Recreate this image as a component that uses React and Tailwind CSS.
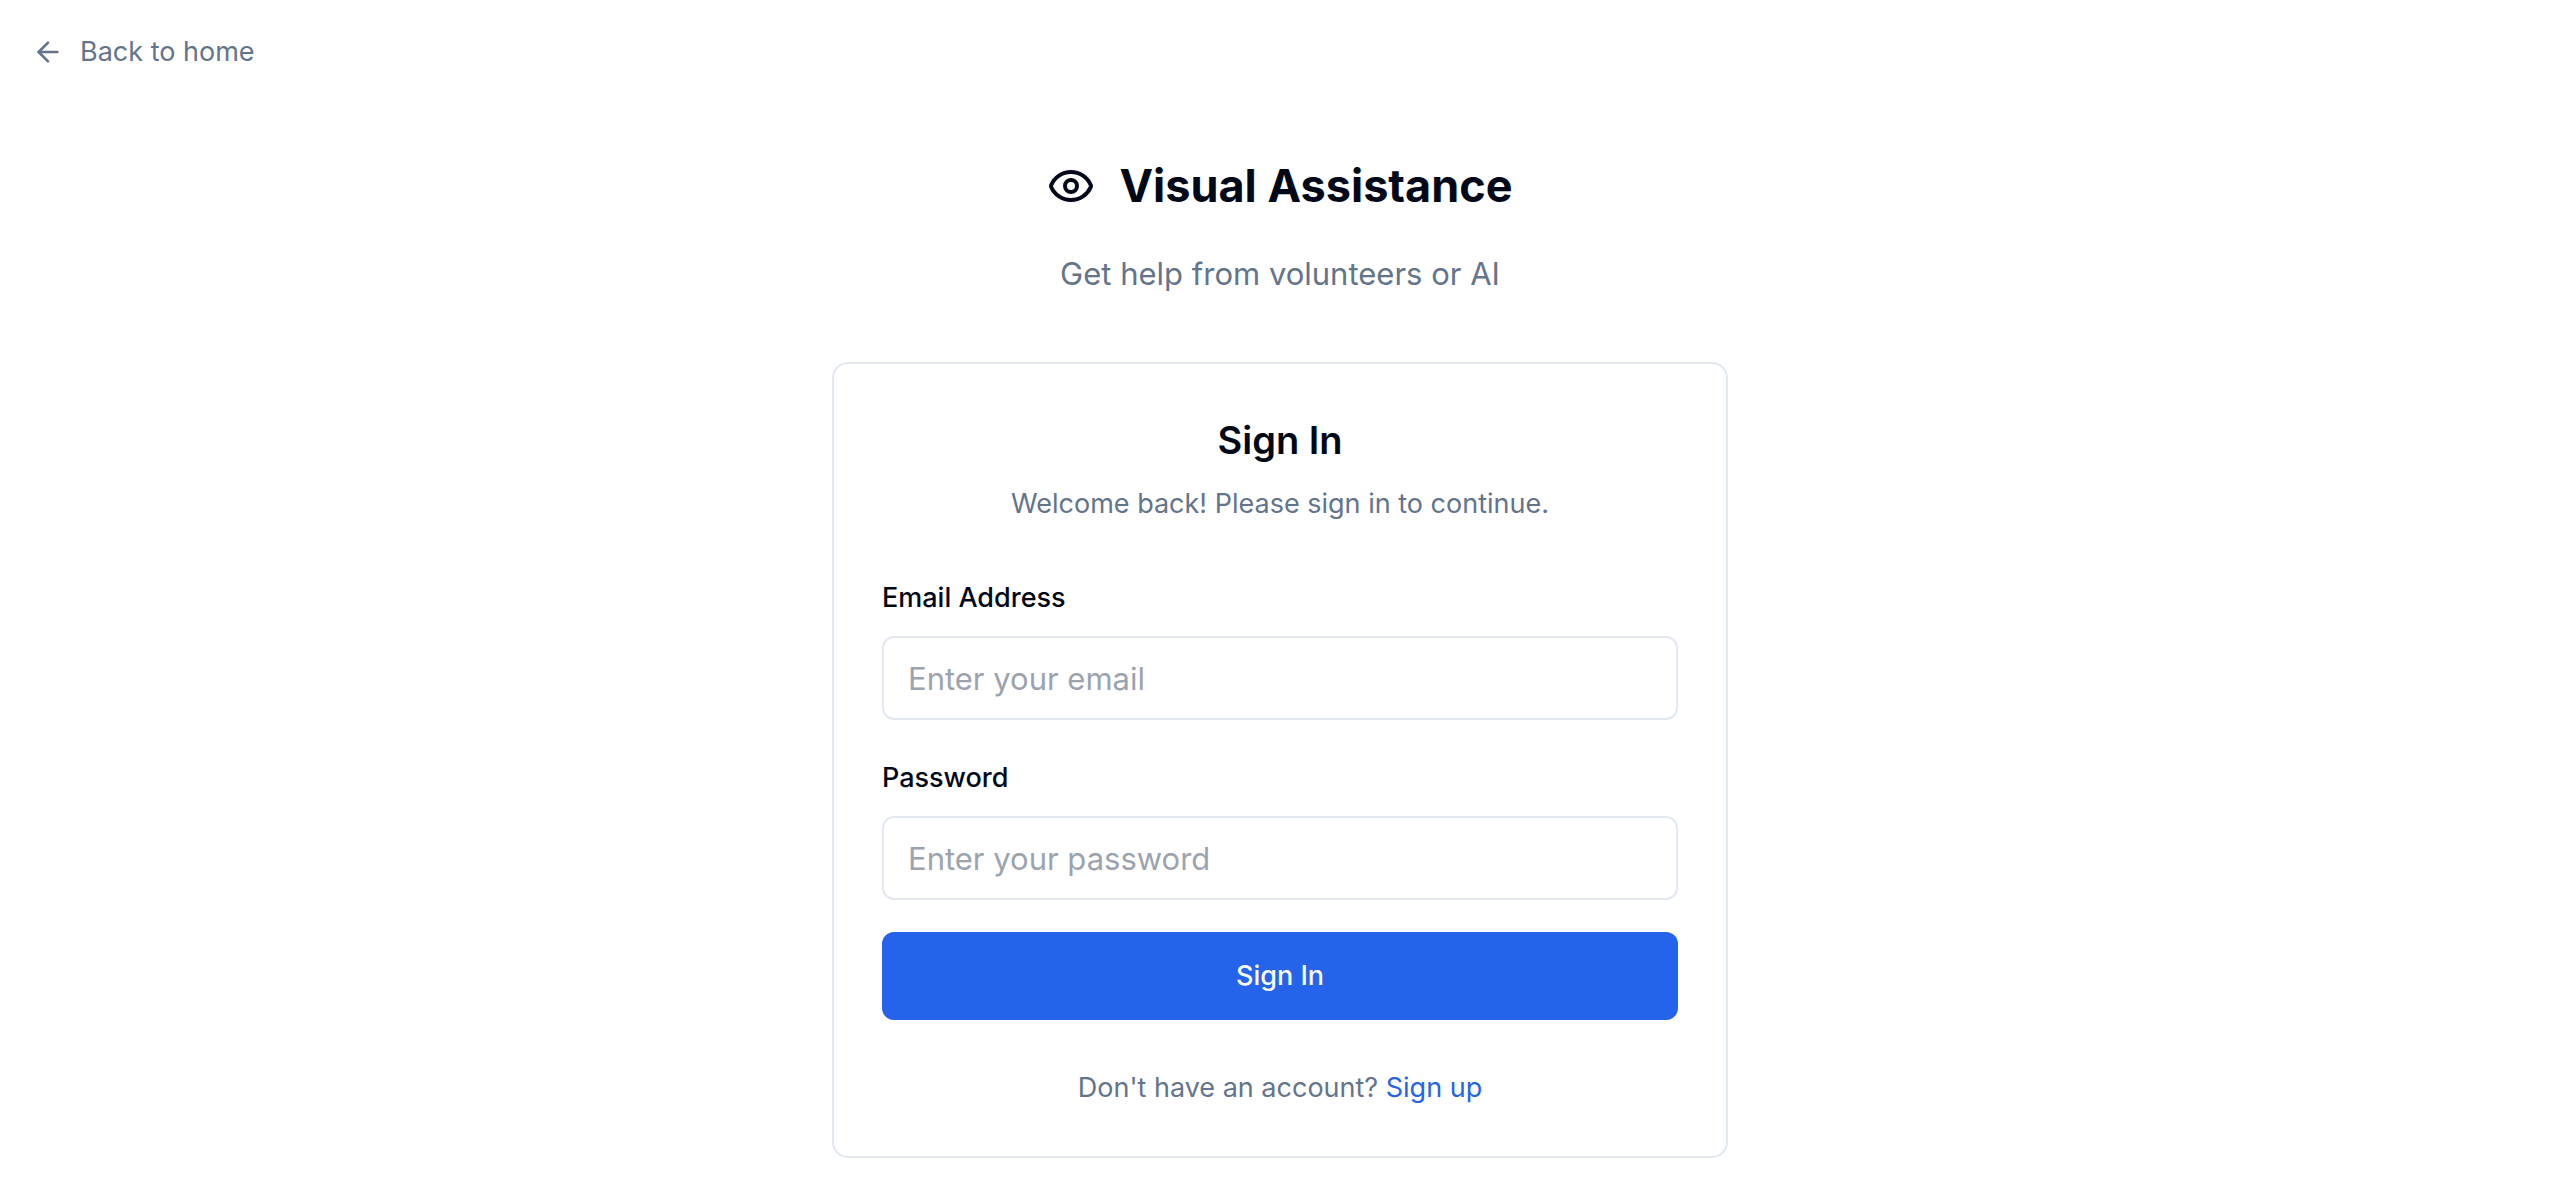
import { ArrowLeft, Eye } from "lucide-react";

function Field({ id, label, type, placeholder }) {
  return (
    <div className="flex flex-col gap-6">
      <label htmlFor={id} className="text-[27px] leading-7 font-medium">
        {label}
      </label>
      <input
        id={id}
        type={type}
        placeholder={placeholder}
        className="h-[84px] w-full rounded-xl border-2 border-[#e2e8f0] bg-white px-6 text-[31px] placeholder:text-[#9ca3af] placeholder:opacity-100"
      />
    </div>
  );
}

export default function App() {
  return (
    <div className="min-h-screen bg-white font-['Inter',sans-serif] text-[#020817] antialiased">
      <nav className="p-8">
        <a href="#" className="flex w-fit items-center gap-4 text-[27px] leading-10 text-[#64748b]">
          <ArrowLeft className="size-8" aria-hidden="true" />
          Back to home
        </a>
      </nav>
      <main className="mx-auto w-full max-w-4xl pt-[50px]">
        <header className="text-center">
          <div className="flex items-center justify-center gap-6">
            <Eye className="size-12" aria-hidden="true" />
            <h1 className="text-[45px] leading-16 font-bold">Visual Assistance</h1>
          </div>
          <p className="mt-7 text-[31px] leading-14 text-[#64748b]">Get help from volunteers or AI</p>
        </header>
        <section className="mt-15 rounded-2xl border-2 border-[#e2e8f0] p-12">
          <h2 className="text-center text-[38px] leading-14 font-semibold">Sign In</h2>
          <p className="mt-4 text-center text-[27px] leading-10 text-[#64748b]">
            Welcome back! Please sign in to continue.
          </p>
          <form className="mt-15" onSubmit={(event) => event.preventDefault()}>
            <div className="flex flex-col gap-11">
              <Field id="email" label="Email Address" type="email" placeholder="Enter your email" />
              <Field id="password" label="Password" type="password" placeholder="Enter your password" />
            </div>
            <button
              type="submit"
              className="mt-8 h-22 w-full rounded-xl bg-[#2563eb] text-[27px] font-medium text-slate-50"
            >
              Sign In
            </button>
          </form>
          <p className="mt-12 text-center text-[27px] leading-10 text-[#64748b]">
            Don't have an account?{" "}
            <a href="#" className="text-[#2563eb]">
              Sign up
            </a>
          </p>
        </section>
      </main>
    </div>
  );
}
